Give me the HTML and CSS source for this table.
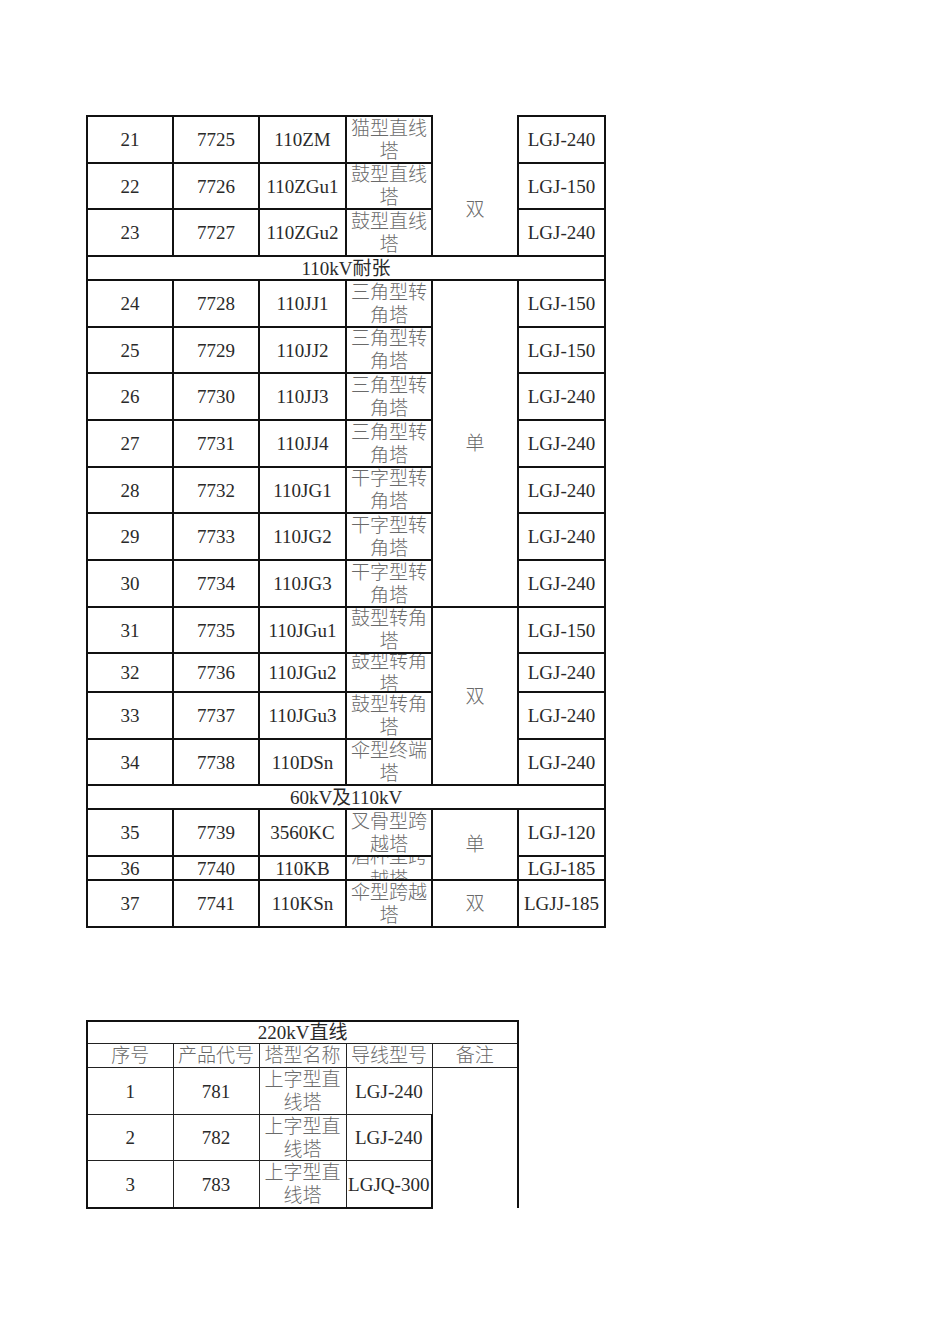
FILE: index.html
```html
<!DOCTYPE html>
<html lang="zh">
<head>
<meta charset="utf-8">
<title>铁塔型号表</title>
<link rel="stylesheet" href="styles.css">
</head>
<body>
<div class="page">
  <table class="t1">
    <colgroup><col class="w86"><col class="w86"><col class="w87"><col class="w86"><col class="w86"><col class="w87"></colgroup>
    <tr class="r47"><td><div class="c">21</div></td><td><div class="c">7725</div></td><td><div class="c">110ZM</div></td><td><div class="c zh">猫型直线塔</div></td><td class="blank"></td><td><div class="c">LGJ-240</div></td></tr>
    <tr class="r46"><td><div class="c">22</div></td><td><div class="c">7726</div></td><td><div class="c">110ZGu1</div></td><td><div class="c zh">鼓型直线塔</div></td><td class="m zh" rowspan="2">双</td><td><div class="c">LGJ-150</div></td></tr>
    <tr class="r47"><td><div class="c">23</div></td><td><div class="c">7727</div></td><td><div class="c">110ZGu2</div></td><td><div class="c zh">鼓型直线塔</div></td><td><div class="c">LGJ-240</div></td></tr>
    <tr class="r24"><td colspan="6"><div class="c">110kV耐张</div></td></tr>
    <tr class="r47"><td><div class="c">24</div></td><td><div class="c">7728</div></td><td><div class="c">110JJ1</div></td><td><div class="c zh">三角型转角塔</div></td><td class="m zh" rowspan="7">单</td><td><div class="c">LGJ-150</div></td></tr>
    <tr class="r46"><td><div class="c">25</div></td><td><div class="c">7729</div></td><td><div class="c">110JJ2</div></td><td><div class="c zh">三角型转角塔</div></td><td><div class="c">LGJ-150</div></td></tr>
    <tr class="r47"><td><div class="c">26</div></td><td><div class="c">7730</div></td><td><div class="c">110JJ3</div></td><td><div class="c zh">三角型转角塔</div></td><td><div class="c">LGJ-240</div></td></tr>
    <tr class="r47"><td><div class="c">27</div></td><td><div class="c">7731</div></td><td><div class="c">110JJ4</div></td><td><div class="c zh">三角型转角塔</div></td><td><div class="c">LGJ-240</div></td></tr>
    <tr class="r46"><td><div class="c">28</div></td><td><div class="c">7732</div></td><td><div class="c">110JG1</div></td><td><div class="c zh">干字型转角塔</div></td><td><div class="c">LGJ-240</div></td></tr>
    <tr class="r47"><td><div class="c">29</div></td><td><div class="c">7733</div></td><td><div class="c">110JG2</div></td><td><div class="c zh">干字型转角塔</div></td><td><div class="c">LGJ-240</div></td></tr>
    <tr class="r47"><td><div class="c">30</div></td><td><div class="c">7734</div></td><td><div class="c">110JG3</div></td><td><div class="c zh">干字型转角塔</div></td><td><div class="c">LGJ-240</div></td></tr>
    <tr class="r46"><td><div class="c">31</div></td><td><div class="c">7735</div></td><td><div class="c">110JGu1</div></td><td><div class="c zh">鼓型转角塔</div></td><td class="m zh" rowspan="4">双</td><td><div class="c">LGJ-150</div></td></tr>
    <tr class="r39"><td><div class="c">32</div></td><td><div class="c">7736</div></td><td><div class="c">110JGu2</div></td><td><div class="c zh">鼓型转角塔</div></td><td><div class="c">LGJ-240</div></td></tr>
    <tr class="r47"><td><div class="c">33</div></td><td><div class="c">7737</div></td><td><div class="c">110JGu3</div></td><td><div class="c zh">鼓型转角塔</div></td><td><div class="c">LGJ-240</div></td></tr>
    <tr class="r46"><td><div class="c">34</div></td><td><div class="c">7738</div></td><td><div class="c">110DSn</div></td><td><div class="c zh">伞型终端塔</div></td><td><div class="c">LGJ-240</div></td></tr>
    <tr class="r24"><td colspan="6"><div class="c">60kV及110kV</div></td></tr>
    <tr class="r47"><td><div class="c">35</div></td><td><div class="c">7739</div></td><td><div class="c">3560KC</div></td><td><div class="c zh">叉骨型跨越塔</div></td><td class="m zh" rowspan="2">单</td><td><div class="c">LGJ-120</div></td></tr>
    <tr class="r24"><td><div class="c">36</div></td><td><div class="c">7740</div></td><td><div class="c">110KB</div></td><td><div class="c zh">酒杯型跨越塔</div></td><td><div class="c">LGJ-185</div></td></tr>
    <tr class="r47"><td><div class="c">37</div></td><td><div class="c">7741</div></td><td><div class="c">110KSn</div></td><td><div class="c zh">伞型跨越塔</div></td><td class="m zh">双</td><td><div class="c">LGJJ-185</div></td></tr>
  </table>

  <table class="t2">
    <colgroup><col class="w86"><col class="w86"><col class="w87"><col class="w86"><col class="w86"></colgroup>
    <tr class="r23"><td colspan="5"><div class="c">220kV直线</div></td></tr>
    <tr class="r24"><td><div class="c zh">序号</div></td><td><div class="c zh">产品代号</div></td><td><div class="c zh">塔型名称</div></td><td><div class="c zh">导线型号</div></td><td><div class="c zh">备注</div></td></tr>
    <tr class="r47"><td><div class="c">1</div></td><td><div class="c">781</div></td><td><div class="c zh">上字型直线塔</div></td><td><div class="c">LGJ-240</div></td><td class="note" rowspan="3"></td></tr>
    <tr class="r46"><td><div class="c">2</div></td><td><div class="c">782</div></td><td><div class="c zh">上字型直线塔</div></td><td><div class="c">LGJ-240</div></td></tr>
    <tr class="r47"><td><div class="c">3</div></td><td><div class="c">783</div></td><td><div class="c zh">上字型直线塔</div></td><td><div class="c">LGJQ-300</div></td></tr>
  </table>
</div>
</body>
</html>
```

FILE: styles.css
```css
html, body {
  margin: 0;
  padding: 0;
  background: #fff;
}

.page {
  padding: 115px 0 0 86px;
  font-family: "Liberation Serif", "Noto Sans CJK SC", serif;
  font-size: 19px;
  color: #2a2a2a;
}

table {
  border-collapse: collapse;
  table-layout: fixed;
}

.t1 { width: 519px; }
.t2 { width: 432px; margin-top: 92px; }

.w86 { width: 86px; }
.w87 { width: 87px; }

td {
  padding: 0;
  text-align: center;
  vertical-align: middle;
  line-height: 23px;
}

.t1 td { border: 2px solid #111; }
.t2 td { border: 1px solid #222; }
.t2 tr:first-child td { border-top: 2px solid #111; }
.t2 td:first-child { border-left: 2px solid #111; }
.t2 td:last-child { border-right: 2px solid #111; }
.t2 tr:last-child td { border-bottom: 2px solid #111; }

.c {
  display: flex;
  align-items: center;
  justify-content: center;
  overflow: hidden;
  padding: 0 1px;
  word-break: break-all;
}

.zh {
  color: #6a6a6a;
  font-weight: 300;
}

.t1 .r47 .c { height: 45px; }
.t1 .r46 .c { height: 44px; }
.t1 .r39 .c { height: 37px; }
.t1 .r24 .c { height: 22px; }

.t2 .r23 .c { height: 21px; }
.t2 .r24 .c { height: 23px; }
.t2 .r47 .c { height: 46px; }
.t2 .r46 .c { height: 45px; }

.t1 td.blank {
  border-top: hidden;
  border-bottom: hidden;
}

.t2 td.note {
  border-bottom: hidden;
}

.m { font-size: 19px; }
```
